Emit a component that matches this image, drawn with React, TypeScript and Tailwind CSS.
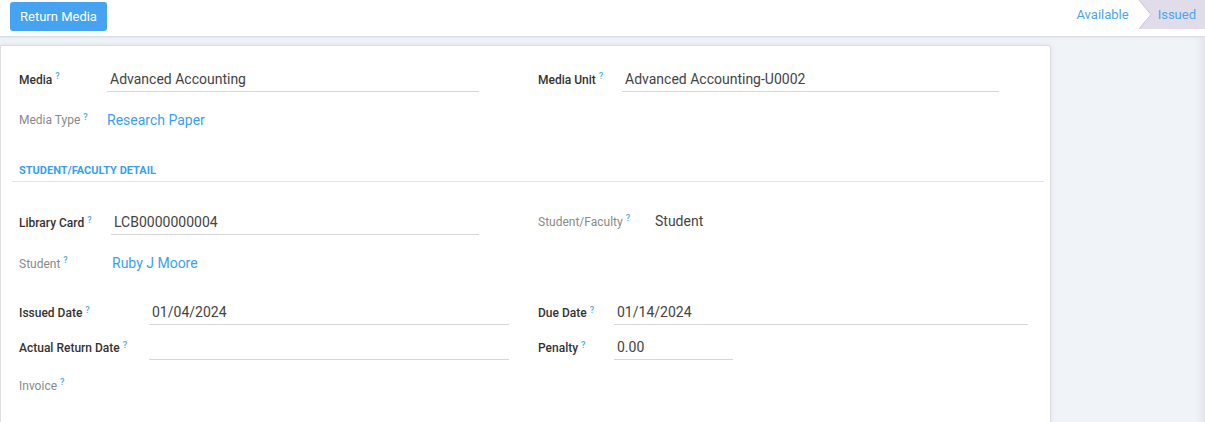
import type { ReactNode } from 'react';

const font = { fontFamily: 'Roboto, "Liberation Sans", sans-serif' };

function Help() {
  return <sup className="ml-[3px] text-[9px] font-semibold text-[#5ab0e0]">?</sup>;
}

function Label({ children, muted = false, width }: { children: ReactNode; muted?: boolean; width: string }) {
  return (
    <div className={`${width} shrink-0 text-[12px] ${muted ? 'font-normal text-[#8a8a8a]' : 'font-medium text-[#333]'}`}>
      {children}
      <Help />
    </div>
  );
}

function Input({ value, width }: { value?: string; width: string }) {
  return (
    <div className={`${width} h-[24px] border-b border-[#d6d6d6] pl-[3px] text-[14px] leading-[22px] text-[#444]`}>
      {value}
    </div>
  );
}

export default function App() {
  return (
    <div style={font} className="h-[422px] w-[1205px] overflow-hidden bg-[#f0f4f8]">
      <div className="flex h-[37px] items-start justify-between border-b border-[#d8dde3] bg-white shadow-[0_1px_2px_rgba(0,0,0,0.06)]">
        <button className="ml-[10px] mt-[2px] h-[29px] rounded-[3px] bg-[#45a3f2] px-[10px] text-[13px] text-white">
          Return Media
        </button>
        <div className="flex h-[29px] items-center text-[13px]">
          <span className="px-[10px] text-[#4ba5ef]">Available</span>
          <span className="relative flex h-full items-center bg-[#e0dcea] pl-[19px] pr-[9px] text-[#4ba5ef]">
            <svg className="absolute left-0 top-0" width="14" height="29" viewBox="0 0 14 29">
              <path d="M0 0 L12 14.5 L0 29 Z" fill="#fff" />
              <path d="M0 0 L12 14.5 L0 29" fill="none" stroke="#c8c3d6" strokeWidth="1" />
            </svg>
            Issued
          </span>
        </div>
      </div>

      <div className="flex">
        <div className="mt-[8px] h-[400px] w-[1051px] rounded-tr-[3px] border border-[#dcdcdc] bg-white pl-[18px] pr-[6px] pt-[21px] shadow-[0_0_6px_rgba(0,0,0,0.08)]">
          <div className="flex">
            <div className="w-[519px]">
              <div className="flex h-[25px] items-center">
                <Label width="w-[88px]">Media</Label>
                <Input width="w-[372px]" value="Advanced Accounting" />
              </div>
              <div className="mt-[17px] flex h-[22px] items-center">
                <Label muted width="w-[88px]">Media Type</Label>
                <span className="text-[14px] text-[#3a9fef]">Research Paper</span>
              </div>
            </div>
            <div className="flex h-[25px] items-center">
              <Label width="w-[84px]">Media Unit</Label>
              <Input width="w-[377px]" value="Advanced Accounting-U0002" />
            </div>
          </div>

          <div className="-ml-[7px] mt-[32px] border-b border-[#e4e4e4] pb-[1px] pl-[7px] text-[11px] font-bold uppercase text-[#3a9fef]">
            Student/Faculty Detail
          </div>

          <div className="mt-[29px] flex">
            <div className="w-[519px]">
              <div className="flex h-[25px] items-center">
                <Label width="w-[92px]">Library Card</Label>
                <Input width="w-[368px]" value="LCB0000000004" />
              </div>
              <div className="mt-[17px] flex h-[22px] items-center">
                <Label muted width="w-[93px]">Student</Label>
                <span className="text-[14px] text-[#3a9fef]">Ruby J Moore</span>
              </div>
            </div>
            <div className="flex h-[22px] items-center">
              <Label muted width="w-[117px]">Student/Faculty</Label>
              <span className="text-[14px] text-[#444]">Student</span>
            </div>
          </div>

          <div className="mt-[26px] flex">
            <div className="w-[519px]">
              <div className="flex h-[25px] items-center">
                <Label width="w-[130px]">Issued Date</Label>
                <Input width="w-[360px]" value="01/04/2024" />
              </div>
              <div className="mt-[10px] flex h-[25px] items-center">
                <Label width="w-[130px]">Actual Return Date</Label>
                <Input width="w-[360px]" />
              </div>
              <div className="mt-[14px] flex h-[22px] items-center">
                <Label muted width="w-[130px]">Invoice</Label>
              </div>
            </div>
            <div>
              <div className="flex h-[25px] items-center">
                <Label width="w-[76px]">Due Date</Label>
                <Input width="w-[414px]" value="01/14/2024" />
              </div>
              <div className="mt-[10px] flex h-[25px] items-center">
                <Label width="w-[76px]">Penalty</Label>
                <Input width="w-[119px]" value="0.00" />
              </div>
            </div>
          </div>
        </div>
        <div className="flex-1" />
        <div className="w-[10px] bg-gradient-to-r from-transparent to-[#e2e6ea]" />
      </div>
    </div>
  );
}
